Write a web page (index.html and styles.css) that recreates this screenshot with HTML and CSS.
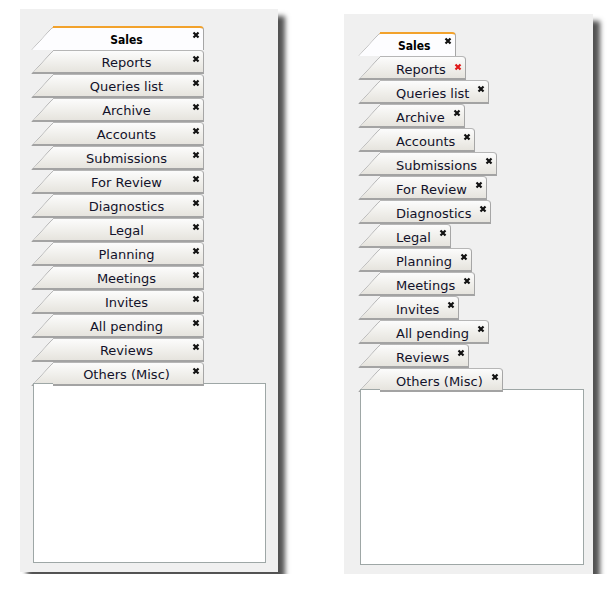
FILE: index.html
```html
<!DOCTYPE html>
<html lang="en">
<head>
    <meta charset="UTF-8">
    <title>Tab strips</title>
    <link rel="stylesheet" href="styles.css">
</head>
<body>
    <!-- fixed width tabs -->
    <div class="panel panel-fixed">
        <div class="tabs">
            <div class="tab active"><span class="tab-label">Sales</span><span class="tab-close"><svg viewBox="0 0 8 8"><path d="M1.5 1.5L6.5 6.5M6.5 1.5L1.5 6.5"/></svg></span></div>
            <div class="tab"><span class="tab-label">Reports</span><span class="tab-close"><svg viewBox="0 0 8 8"><path d="M1.5 1.5L6.5 6.5M6.5 1.5L1.5 6.5"/></svg></span></div>
            <div class="tab"><span class="tab-label">Queries list</span><span class="tab-close"><svg viewBox="0 0 8 8"><path d="M1.5 1.5L6.5 6.5M6.5 1.5L1.5 6.5"/></svg></span></div>
            <div class="tab"><span class="tab-label">Archive</span><span class="tab-close"><svg viewBox="0 0 8 8"><path d="M1.5 1.5L6.5 6.5M6.5 1.5L1.5 6.5"/></svg></span></div>
            <div class="tab"><span class="tab-label">Accounts</span><span class="tab-close"><svg viewBox="0 0 8 8"><path d="M1.5 1.5L6.5 6.5M6.5 1.5L1.5 6.5"/></svg></span></div>
            <div class="tab"><span class="tab-label">Submissions</span><span class="tab-close"><svg viewBox="0 0 8 8"><path d="M1.5 1.5L6.5 6.5M6.5 1.5L1.5 6.5"/></svg></span></div>
            <div class="tab"><span class="tab-label">For Review</span><span class="tab-close"><svg viewBox="0 0 8 8"><path d="M1.5 1.5L6.5 6.5M6.5 1.5L1.5 6.5"/></svg></span></div>
            <div class="tab"><span class="tab-label">Diagnostics</span><span class="tab-close"><svg viewBox="0 0 8 8"><path d="M1.5 1.5L6.5 6.5M6.5 1.5L1.5 6.5"/></svg></span></div>
            <div class="tab"><span class="tab-label">Legal</span><span class="tab-close"><svg viewBox="0 0 8 8"><path d="M1.5 1.5L6.5 6.5M6.5 1.5L1.5 6.5"/></svg></span></div>
            <div class="tab"><span class="tab-label">Planning</span><span class="tab-close"><svg viewBox="0 0 8 8"><path d="M1.5 1.5L6.5 6.5M6.5 1.5L1.5 6.5"/></svg></span></div>
            <div class="tab"><span class="tab-label">Meetings</span><span class="tab-close"><svg viewBox="0 0 8 8"><path d="M1.5 1.5L6.5 6.5M6.5 1.5L1.5 6.5"/></svg></span></div>
            <div class="tab"><span class="tab-label">Invites</span><span class="tab-close"><svg viewBox="0 0 8 8"><path d="M1.5 1.5L6.5 6.5M6.5 1.5L1.5 6.5"/></svg></span></div>
            <div class="tab"><span class="tab-label">All pending</span><span class="tab-close"><svg viewBox="0 0 8 8"><path d="M1.5 1.5L6.5 6.5M6.5 1.5L1.5 6.5"/></svg></span></div>
            <div class="tab"><span class="tab-label">Reviews</span><span class="tab-close"><svg viewBox="0 0 8 8"><path d="M1.5 1.5L6.5 6.5M6.5 1.5L1.5 6.5"/></svg></span></div>
            <div class="tab"><span class="tab-label">Others (Misc)</span><span class="tab-close"><svg viewBox="0 0 8 8"><path d="M1.5 1.5L6.5 6.5M6.5 1.5L1.5 6.5"/></svg></span></div>
        </div>
        <div class="tab-content"></div>
    </div>

    <!-- tabs sized to their labels -->
    <div class="panel panel-auto">
        <div class="tabs">
            <div class="tab active"><span class="tab-label">Sales</span><span class="tab-close"><svg viewBox="0 0 8 8"><path d="M1.5 1.5L6.5 6.5M6.5 1.5L1.5 6.5"/></svg></span></div>
            <div class="tab"><span class="tab-label">Reports</span><span class="tab-close hover"><svg viewBox="0 0 8 8"><path d="M1.5 1.5L6.5 6.5M6.5 1.5L1.5 6.5"/></svg></span></div>
            <div class="tab"><span class="tab-label">Queries list</span><span class="tab-close"><svg viewBox="0 0 8 8"><path d="M1.5 1.5L6.5 6.5M6.5 1.5L1.5 6.5"/></svg></span></div>
            <div class="tab"><span class="tab-label">Archive</span><span class="tab-close"><svg viewBox="0 0 8 8"><path d="M1.5 1.5L6.5 6.5M6.5 1.5L1.5 6.5"/></svg></span></div>
            <div class="tab"><span class="tab-label">Accounts</span><span class="tab-close"><svg viewBox="0 0 8 8"><path d="M1.5 1.5L6.5 6.5M6.5 1.5L1.5 6.5"/></svg></span></div>
            <div class="tab"><span class="tab-label">Submissions</span><span class="tab-close"><svg viewBox="0 0 8 8"><path d="M1.5 1.5L6.5 6.5M6.5 1.5L1.5 6.5"/></svg></span></div>
            <div class="tab"><span class="tab-label">For Review</span><span class="tab-close"><svg viewBox="0 0 8 8"><path d="M1.5 1.5L6.5 6.5M6.5 1.5L1.5 6.5"/></svg></span></div>
            <div class="tab"><span class="tab-label">Diagnostics</span><span class="tab-close"><svg viewBox="0 0 8 8"><path d="M1.5 1.5L6.5 6.5M6.5 1.5L1.5 6.5"/></svg></span></div>
            <div class="tab"><span class="tab-label">Legal</span><span class="tab-close"><svg viewBox="0 0 8 8"><path d="M1.5 1.5L6.5 6.5M6.5 1.5L1.5 6.5"/></svg></span></div>
            <div class="tab"><span class="tab-label">Planning</span><span class="tab-close"><svg viewBox="0 0 8 8"><path d="M1.5 1.5L6.5 6.5M6.5 1.5L1.5 6.5"/></svg></span></div>
            <div class="tab"><span class="tab-label">Meetings</span><span class="tab-close"><svg viewBox="0 0 8 8"><path d="M1.5 1.5L6.5 6.5M6.5 1.5L1.5 6.5"/></svg></span></div>
            <div class="tab"><span class="tab-label">Invites</span><span class="tab-close"><svg viewBox="0 0 8 8"><path d="M1.5 1.5L6.5 6.5M6.5 1.5L1.5 6.5"/></svg></span></div>
            <div class="tab"><span class="tab-label">All pending</span><span class="tab-close"><svg viewBox="0 0 8 8"><path d="M1.5 1.5L6.5 6.5M6.5 1.5L1.5 6.5"/></svg></span></div>
            <div class="tab"><span class="tab-label">Reviews</span><span class="tab-close"><svg viewBox="0 0 8 8"><path d="M1.5 1.5L6.5 6.5M6.5 1.5L1.5 6.5"/></svg></span></div>
            <div class="tab"><span class="tab-label">Others (Misc)</span><span class="tab-close"><svg viewBox="0 0 8 8"><path d="M1.5 1.5L6.5 6.5M6.5 1.5L1.5 6.5"/></svg></span></div>
        </div>
        <div class="tab-content"></div>
    </div>
</body>
</html>
```

FILE: styles.css
```css
body {
    margin: 0;
    padding: 9px 0 0 20px;
    display: flex;
    align-items: flex-start;
    gap: 66px;
    font-family: "DejaVu Sans", Verdana, sans-serif;
    font-size: 13px;
    color: #12122a;
    background: #fff;
}

.panel {
    box-sizing: border-box;
    display: flex;
    flex-direction: column;
    background: #f0f0f0;
    box-shadow: 7px 7px 5px rgba(0, 0, 0, 0.68);
    isolation: isolate;
}

.panel-fixed {
    width: 258px;
    height: 563px;
    padding: 17px 12px 9px 11px;
}

.panel-auto {
    width: 249px;
    height: 560px;
    margin-top: 5px;
    padding: 18px 9px 9px 14px;
}

.tabs {
    display: flex;
    flex-direction: column;
    align-items: flex-start;
}

.tab {
    position: relative;
    box-sizing: border-box;
    display: flex;
    height: 24px;
    margin-left: 22px;
    border-top: 1px solid #b6b6b6;
    border-right: 1px solid #a6a6a6;
    border-bottom: 2px solid #a3a3a3;
    border-top-right-radius: 4px;
    background: linear-gradient(#fcfcfc, #f0efeb 55%, #e6e4de);
}

/* slanted left edge */
.tab::before {
    content: "";
    position: absolute;
    z-index: -1;
    top: -1px;
    bottom: -2px;
    left: -22px;
    width: 40px;
    border-top: 1px solid #b6b6b6;
    border-left: 1px solid #a2a2a2;
    border-bottom: 2px solid #a3a3a3;
    border-top-left-radius: 3px;
    background: linear-gradient(#fcfcfc, #f0efeb 55%, #e6e4de);
    transform: skewX(-42.5deg);
    transform-origin: 0 100%;
}

.tab.active {
    border-top: 2px solid #f2a22c;
    border-bottom: 0;
    background: #fdfdff;
}

.tab.active::before {
    top: -2px;
    bottom: 0;
    border-top: 2px solid #f2a22c;
    border-bottom: 0;
    background: #fdfdff;
}

.tab-label {
    padding: 4px 0 0 16px;
    line-height: 17px;
    white-space: nowrap;
}

.tab.active .tab-label {
    padding: 2px 5px 0 18px;
    line-height: 20px;
    font-family: "DejaVu Sans Condensed", "Liberation Sans", sans-serif;
    font-size: 12px;
    font-weight: bold;
    color: #000;
}

.tab-close {
    flex: none;
    width: 8px;
    height: 8px;
    margin: 4px 3px 0 8px;
}

.tab.active .tab-close {
    margin-top: 3px;
}

.tab-close svg {
    display: block;
    width: 8px;
    height: 8px;
    fill: none;
    stroke: #111;
    stroke-width: 2.2;
}

.tab-close.hover {
    margin-top: 6px;
}

.tab-close.hover svg {
    stroke: #e01818;
}

.panel-fixed .tab {
    width: 151px;
}

.panel-fixed .tab .tab-label {
    flex: 1;
    padding: 3px 0 0 8px;
    line-height: 18px;
    text-align: center;
}

.panel-fixed .tab.active .tab-label {
    padding-top: 2px;
    line-height: 20px;
}

.panel-fixed .tab-close {
    margin-left: 0;
}

.tab-content {
    flex: 1;
    margin: -3px 0 0 2px;
    background: #fff;
    border: 1px solid #9ea7a6;
}
```
